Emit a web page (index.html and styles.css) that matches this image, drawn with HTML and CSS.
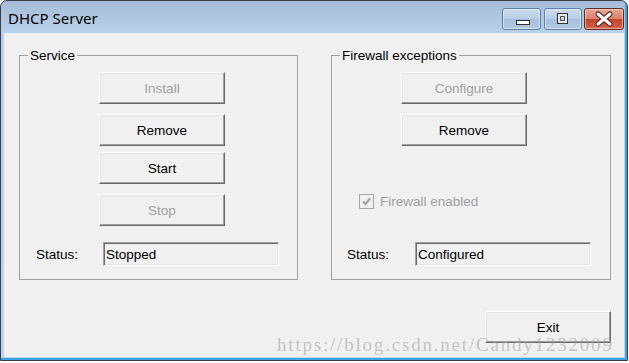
FILE: index.html
```html
<!DOCTYPE html>
<html lang="en">
<head>
  <meta charset="UTF-8">
  <title>DHCP Server</title>
  <link rel="stylesheet" href="styles.css">
</head>
<body>
  <div class="window">
    <div class="titlebar">
      <span class="title">DHCP Server</span>
      <div class="caption">
        <button class="cap cap-min">
          <svg width="37" height="20" viewBox="0 0 37 20"><rect x="13.5" y="11.5" width="13" height="4" fill="#fff" stroke="#2e2e2e"/></svg>
        </button>
        <button class="cap cap-max">
          <svg width="36" height="20" viewBox="0 0 36 20"><rect x="12.5" y="4.5" width="10" height="10" fill="#e6ebf1" stroke="#333"/><rect x="15.5" y="7.5" width="4" height="4" fill="#c9d2dc" stroke="#555"/></svg>
        </button>
        <button class="cap cap-close">
          <svg width="38" height="20" viewBox="0 0 38 20"><path d="M13 5 L25 15 M25 5 L13 15" stroke="#4b1810" stroke-width="5" stroke-linecap="round"/><path d="M13 5 L25 15 M25 5 L13 15" stroke="#fff" stroke-width="3" stroke-linecap="round"/></svg>
        </button>
      </div>
    </div>

    <div class="client">
      <div class="groups">
        <fieldset class="group">
          <legend>Service</legend>
          <div class="btn-col service-btns">
            <button class="btn" disabled>Install</button>
            <button class="btn gap-big">Remove</button>
            <button class="btn gap-small">Start</button>
            <button class="btn gap-big" disabled>Stop</button>
          </div>
          <div class="status-row">
            <span class="status-label">Status:</span>
            <div class="status-field">Stopped</div>
          </div>
        </fieldset>

        <fieldset class="group group-fw">
          <legend>Firewall exceptions</legend>
          <div class="btn-col fw-btns">
            <button class="btn" disabled>Configure</button>
            <button class="btn gap-big">Remove</button>
          </div>
          <label class="check disabled">
            <span class="check-box">
              <svg width="13" height="13" viewBox="0 0 13 13"><path d="M3 6.5 L5.5 9 L10 3.5" fill="none" stroke="#a0a0a0" stroke-width="2"/></svg>
            </span>
            Firewall enabled
          </label>
          <div class="status-row status-fw">
            <span class="status-label">Status:</span>
            <div class="status-field">Configured</div>
          </div>
        </fieldset>
      </div>

      <div class="footer">
        <button class="btn">Exit</button>
      </div>

      <div class="watermark">https://blog.csdn.net/Candy1232009</div>
    </div>
  </div>
</body>
</html>
```

FILE: styles.css
```css
body {
  margin: 0;
  background: #fff;
  font-family: "Liberation Sans", Arial, sans-serif;
  font-size: 13.5px;
}
.window {
  width: 628px;
  height: 361px;
  box-sizing: border-box;
  border: 1px solid #3a3f47;
  border-radius: 7px 7px 0 0;
  background: linear-gradient(#a6bcd8, #b9d1eb 32px, #bcd4ee);
  box-shadow: inset -2px -2px 0 #3aa4e4;
  padding: 0 3px 3px;
  display: flex;
  flex-direction: column;
}
.titlebar {
  height: 32px;
  display: flex;
  align-items: flex-start;
}
.title {
  font-family: "Noto Sans", sans-serif;
  font-size: 15px;
  margin: 7px 0 0 4px;
  color: #000;
}
.caption {
  margin-left: auto;
  margin-top: 7px;
  display: flex;
}
.cap {
  height: 22px;
  padding: 0;
  border: 1px solid #5f7fa6;
  border-radius: 3px;
  background: linear-gradient(#cddced, #b7cce4 50%, #a6bfdc 51%, #b4cae3);
  box-shadow: inset 0 0 0 1px rgba(255,255,255,0.45);
  display: flex;
  align-items: center;
  justify-content: center;
}
.cap-min { width: 39px; }
.cap-max { width: 38px; margin-left: 3px; }
.cap-close {
  width: 40px;
  margin-left: 2px;
  border-color: #6e2419;
  background: linear-gradient(#e7a898, #d9806b 50%, #c2432b 51%, #d0654e);
}

.client {
  flex: 1;
  background: #f0f0f0;
  padding: 14px 13px 0 15px;
  position: relative;
}
.groups {
  display: flex;
  gap: 33px;
}
.group {
  margin: 0;
  padding: 0;
  width: 279px;
  height: 233px;
  box-sizing: border-box;
  border: 1px solid #a0a0a0;
}
.group-fw { width: 280px; }
.group legend {
  margin-left: 8px;
  padding: 0 2px;
  line-height: 17px;
}
.btn-col {
  display: flex;
  flex-direction: column;
  padding-top: 8px;
}
.service-btns { padding-left: 79px; }
.fw-btns { padding-left: 69px; }
.btn {
  width: 126px;
  height: 32px;
  padding: 0;
  font-family: inherit;
  font-size: 13.5px;
  color: #000;
  background: #f0f0f0;
  border: 1px solid;
  border-color: #fff #696969 #696969 #fff;
  box-shadow: inset -1px -1px 0 #a0a0a0, inset 1px 1px 0 #e3e3e3;
}
.btn:disabled { color: #a0a0a0; }
.gap-big { margin-top: 10px; }
.gap-small { margin-top: 6px; }

.status-row {
  display: flex;
  align-items: center;
  margin-top: 16px;
  padding-left: 16px;
}
.status-label { width: 67px; }
.status-field {
  width: 176px;
  height: 24px;
  box-sizing: border-box;
  padding: 1px 2px 0;
  line-height: 22px;
  border: 1px solid;
  border-color: #a0a0a0 #fff #fff #a0a0a0;
  box-shadow: inset 1px 1px 0 #696969, inset -1px -1px 0 #e3e3e3;
}
.status-fw { margin-top: 33px; padding-left: 15px; }
.status-fw .status-label { width: 68px; }

.check {
  display: flex;
  align-items: center;
  margin: 48px 0 0 27px;
  height: 15px;
}
.check.disabled { color: #a0a0a0; }
.check-box {
  width: 15px;
  height: 15px;
  box-sizing: border-box;
  border: 1px solid #a6a6a6;
  background: #f0f0f0;
  margin-right: 6px;
  display: flex;
}

.footer {
  display: flex;
  justify-content: flex-end;
  margin-top: 31px;
}

.watermark {
  position: absolute;
  left: 273px;
  top: 302px;
  font-family: "Liberation Serif", serif;
  font-size: 19px;
  line-height: 1;
  letter-spacing: 1.8px;
  color: rgba(165, 165, 165, 0.6);
  white-space: nowrap;
}
```
